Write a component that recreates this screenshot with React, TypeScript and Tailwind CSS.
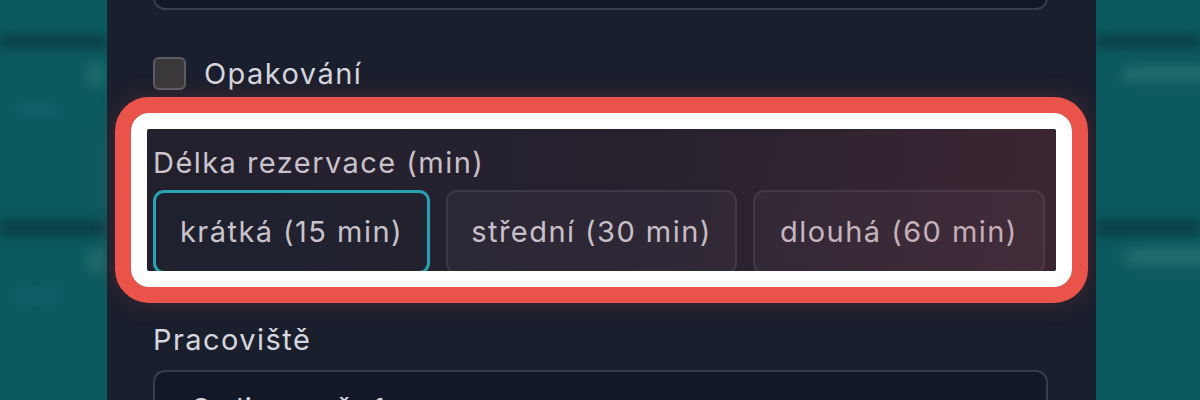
import React from "react";

const durations = [
  { label: "krátká (15 min)", w: "w-[277px]", active: true },
  { label: "střední (30 min)", w: "w-[291px]", active: false },
  { label: "dlouhá (60 min)", w: "w-[292px]", active: false },
];

const BlurSide = ({ side }: { side: "left" | "right" }) => {
  return (
    <div className="relative h-full overflow-hidden bg-[#0b5a5f]">
      <div className="flex flex-col blur-[5px]">
        <div className="h-[34px] shrink-0" />
        <div className="h-[15px] shrink-0 bg-[#0a434a]" />
        <div className="h-[170px] shrink-0" />
        <div className="h-[18px] shrink-0 bg-[#0a434a]" />
      </div>
      {side === "left" ? (
        <>
          <div className="absolute left-[86px] top-[62px] w-[20px] h-[26px] rounded-full bg-[#1f6b6c] blur-[6px]" />
          <div className="absolute left-[86px] top-[248px] w-[20px] h-[26px] rounded-full bg-[#1f6b6c] blur-[6px]" />
          <div className="absolute left-[14px] top-[104px] w-[48px] h-[12px] rounded-full bg-[#11626a] blur-[6px]" />
          <div className="absolute left-[14px] top-[290px] w-[48px] h-[12px] rounded-full bg-[#11626a] blur-[6px]" />
        </>
      ) : (
        <>
          <div className="absolute left-[26px] top-[66px] w-[110px] h-[16px] rounded-full bg-[#226c6d] blur-[6px]" />
          <div className="absolute left-[28px] top-[248px] w-[110px] h-[18px] rounded-full bg-[#226c6d] blur-[6px]" />
        </>
      )}
    </div>
  );
};

const App = () => {
  return (
    <div
      className="w-[1200px] h-[400px] flex overflow-hidden bg-[#0b5a5f] text-[#d5d6de]"
      style={{ fontFamily: "Inter, 'Noto Sans', sans-serif" }}
    >
      <div className="w-[107px] shrink-0">
        <BlurSide side="left" />
      </div>

      <div className="w-[989px] shrink-0 bg-[#1a1f2d] pl-[46px] pr-[48px] flex flex-col text-[29px] tracking-[0.05em]">
        {/* previous field, scrolled off */}
        <div className="shrink-0 -mt-[50px] h-[60px] rounded-[12px] border-2 border-[#363d4c] bg-[#121827]" />

        <label className="shrink-0 mt-[47px] flex items-center gap-[18px] h-[33px]">
          <span className="w-[33px] h-[33px] rounded-[6px] border-2 border-[#5d5d62] bg-[#3a393c]" />
          <span className="leading-none">Opakování</span>
        </label>

        <div className="relative shrink-0 mt-[55px]">
          <div className="h-[36px] leading-[36px]">Délka rezervace (min)</div>
          <div className="mt-[9px] flex gap-4">
            {durations.map((d) => (
              <button
                key={d.label}
                className={`${d.w} h-[84px] shrink-0 rounded-[11px] flex items-center justify-center ${
                  d.active
                    ? "border-[3px] border-[#1fb3c2] bg-[#16202e]"
                    : "border-2 border-[#343a48] bg-[#222736]"
                }`}
              >
                {d.label}
              </button>
            ))}
          </div>

          {/* annotation highlight */}
          <div className="pointer-events-none absolute -top-[48px] -left-[38px] -right-[40px] h-[206px] rounded-[34px] border-[16px] border-[#e9534a] shadow-[0_0_26px_rgba(233,83,74,0.18)]">
            <div className="h-full rounded-[18px] border-[16px] border-white">
              <div className="h-full rounded-[6px] bg-[linear-gradient(100deg,rgba(110,40,50,0.10)_0%,rgba(120,45,55,0.14)_55%,rgba(150,55,65,0.28)_100%)]" />
            </div>
          </div>
        </div>

        <div className="shrink-0 mt-[48px] h-[36px] leading-[36px]">Pracoviště</div>
        <div className="shrink-0 mt-[12px] h-[70px] rounded-[12px] border-2 border-[#363d4c] bg-[#121827] pl-[35px] pt-[22px] leading-none">
          Ordinace č. 1
        </div>
      </div>

      <div className="flex-1">
        <BlurSide side="right" />
      </div>
    </div>
  );
};

export default App;
